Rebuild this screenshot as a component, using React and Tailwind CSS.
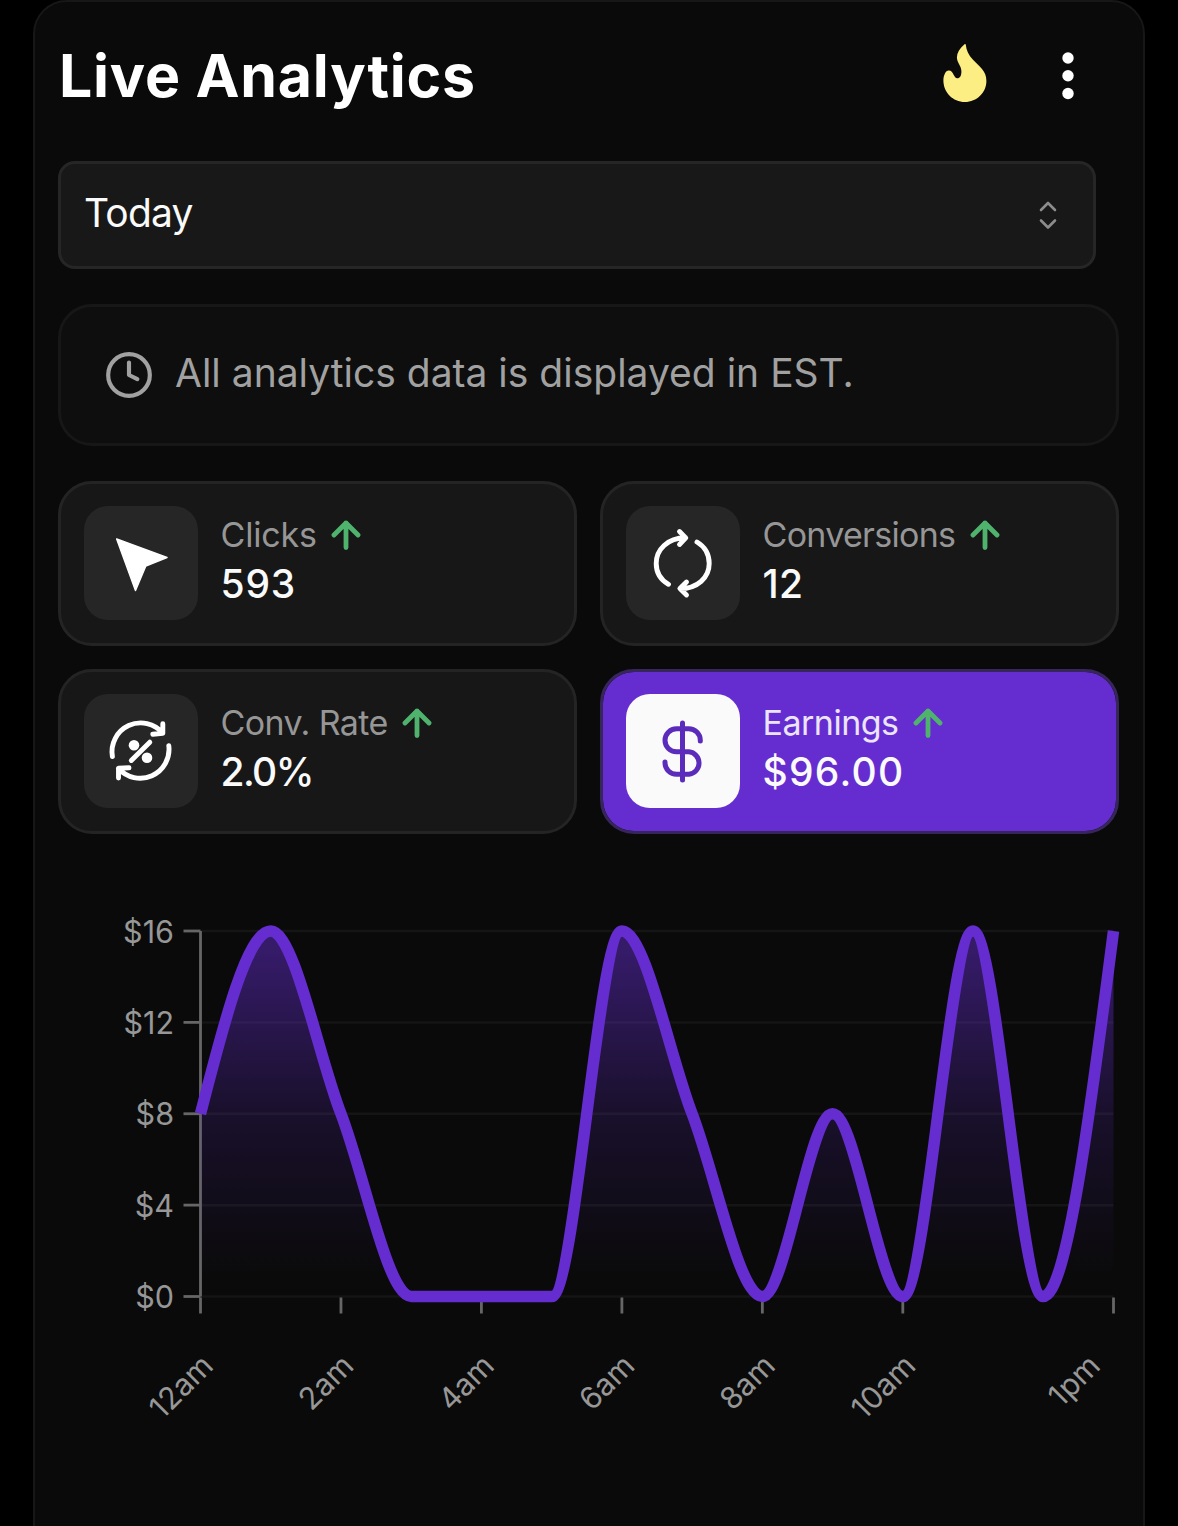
import React from "react";
import { Clock } from "lucide-react";

const earnings = [8, 16, 8, 0, 0, 0, 16, 8, 0, 8, 0, 16, 0, 16];

const xTicks = [
  { index: 0, label: "12am" },
  { index: 2, label: "2am" },
  { index: 4, label: "4am" },
  { index: 6, label: "6am" },
  { index: 8, label: "8am" },
  { index: 10, label: "10am" },
  { index: 13, label: "1pm", shift: -26 },
];

const yTicks = [16, 12, 8, 4, 0];

// Chart area, in px inside the svg
const LEFT = 142.5;
const RIGHT = 1055.5;
const TOP = 51;
const BOTTOM = 416.5;

const getX = (i) => LEFT + ((RIGHT - LEFT) * i) / (earnings.length - 1);
const getY = (v) => BOTTOM - ((BOTTOM - TOP) * v) / 16;

// Monotone cubic curve through the points
const buildLine = (values) => {
  const pts = values.map((v, i) => [getX(i), getY(v)]);
  const last = pts.length - 1;
  const slope = (i) =>
    (pts[i + 1][1] - pts[i][1]) / (pts[i + 1][0] - pts[i][0]);

  const tangents = pts.map((_, i) => {
    if (i === 0 || i === last) return 0;
    const a = slope(i - 1);
    const b = slope(i);
    const s = Math.sign(a) + Math.sign(b);
    return s * Math.min(Math.abs(a), Math.abs(b), 0.25 * Math.abs(a + b)) || 0;
  });
  tangents[0] = (3 * slope(0) - tangents[1]) / 2;
  tangents[last] = (3 * slope(last - 1) - tangents[last - 1]) / 2;

  let d = `M${pts[0][0]},${pts[0][1]}`;
  for (let i = 0; i < last; i++) {
    const [x0, y0] = pts[i];
    const [x1, y1] = pts[i + 1];
    const dx = (x1 - x0) / 3;
    d += `C${x0 + dx},${y0 + dx * tangents[i]} ${x1 - dx},${
      y1 - dx * tangents[i + 1]
    } ${x1},${y1}`;
  }
  return d;
};

const FlameIcon = () => (
  <svg width="44" height="58" viewBox="0 0 44 58" fill="#fdee84" className="-mt-[5px]">
    <path d="M21.500 0.300C16 5 13.500 9.500 14 14.500C14.500 19 18.400 22 18.400 27.500C18.400 31.500 17 34.300 14.300 34.300C10.500 34.300 10.800 26.500 5.800 26.500C2.500 26.500 0.400 31.500 0.400 36.500C0.400 48.500 10 58 21.900 58C33.800 58 43.400 48.500 43.400 37C43.400 32 42 28.500 39 25C36 21.500 33 19 30 15.800C25.500 11 23.300 6.500 22.800 0.800Q22.500 -0.500 21.500 0.300Z" />
  </svg>
);

const DotsIcon = () => (
  <svg width="24" height="58" viewBox="0 0 24 58" fill="white">
    <circle cx="12" cy="11" r="5.7" />
    <circle cx="12" cy="28.7" r="5.7" />
    <circle cx="12" cy="46.5" r="5.7" />
  </svg>
);

const SelectIcon = () => (
  <svg
    width="20"
    height="30"
    viewBox="0 0 20 30"
    fill="none"
    stroke="#8c8c8c"
    strokeWidth="2.600"
    strokeLinecap="round"
    strokeLinejoin="round"
  >
    <path d="M3 10L10 3L17 10M3 20.500L10 27.500L17 20.500" />
  </svg>
);

const ArrowUp = () => (
  <svg
    width="30"
    height="32"
    viewBox="0 0 30 32"
    fill="none"
    stroke="#4fb36d"
    strokeWidth="4.800"
    strokeLinecap="round"
    strokeLinejoin="round"
  >
    <path d="M15 28.500V4M3 16L15 4L27 16" />
  </svg>
);

const CursorIcon = () => (
  <svg width="114" height="114" viewBox="0.5 0 114 114" fill="white">
    <path
      d="M33.200 33L83.500 51.500L62.300 60L52 84.500Z"
      stroke="white"
      strokeWidth="1.500"
      strokeLinejoin="round"
    />
  </svg>
);

const CycleIcon = () => (
  <svg
    width="114"
    height="114"
    viewBox="0.5 0 114 114"
    fill="none"
    stroke="white"
    strokeWidth="4.900"
    strokeLinecap="round"
    strokeLinejoin="round"
  >
    <path d="M43 78.300C35.500 74 30.700 66.500 30.700 57.500C30.700 43.500 42 32 60 31.800M54 25.500L60.300 31.900L54 38.500" />
    <path d="M71.500 36C79 40.500 83.700 48.500 83.700 57.500C83.700 71.500 72 82.600 54.500 82.600M61 76L54.400 82.600L61 89" />
  </svg>
);

const RateIcon = () => (
  <svg
    width="114"
    height="114"
    viewBox="0.5 -0.5 114 114"
    fill="none"
    stroke="white"
    strokeWidth="4.900"
    strokeLinecap="round"
    strokeLinejoin="round"
  >
    <path d="M28.900 62A28.800 28.800 0 0 1 79.300 38.600M79.300 29.300L79.300 38.800L69.300 39.700" />
    <path d="M85.300 51.300A28.800 28.800 0 0 1 35 73.800M35 83.500L35 73.800L45.500 73.300" />
    <path d="M66.300 47.700L47.800 66" />
    <circle cx="50.500" cy="50.700" r="5.300" fill="white" stroke="none" />
    <circle cx="63.500" cy="63.300" r="5.300" fill="white" stroke="none" />
  </svg>
);

const DollarIcon = () => (
  <svg
    width="114"
    height="114"
    viewBox="0.5 -0.5 114 114"
    fill="none"
    stroke="#5b2cbb"
    strokeWidth="5"
    strokeLinecap="round"
  >
    <path d="M57 28.500V85.500" />
    <path d="M74.800 46.500V45.500A11.500 11.500 0 0 0 63.300 34.300H51A11.500 11.500 0 0 0 51 57.300H63.300A11.300 11.300 0 0 1 63.300 79.800H51A11.500 11.500 0 0 1 39.500 68.500V67.500" />
  </svg>
);

const stats = [
  {
    label: "Clicks",
    value: "593",
    icon: <CursorIcon />,
    labelClass: "tracking-[-0.2px]",
    valueClass: "tracking-[0.8px]",
  },
  {
    label: "Conversions",
    value: "12",
    icon: <CycleIcon />,
    labelClass: "tracking-[-0.7px]",
    valueClass: "tracking-[0.3px]",
  },
  {
    label: "Conv. Rate",
    value: "2.0%",
    icon: <RateIcon />,
    labelClass: "tracking-[-0.6px]",
    valueClass: "tracking-[-1.6px]",
  },
  {
    label: "Earnings",
    value: "$96.00",
    icon: <DollarIcon />,
    labelClass: "tracking-[-0.5px]",
    valueClass: "tracking-[1.3px]",
    active: true,
  },
];

const StatCard = ({ label, value, icon, active, labelClass, valueClass }) => (
  <div
    className={`flex h-[165px] items-start rounded-[34px] border-[3px] pt-[22px] pl-[22.500px] ${
      active
        ? "border-[#36265c] bg-[#652dd0] bg-clip-padding"
        : "border-[#242424] bg-[#171717]"
    }`}
  >
    <div
      className={`h-[114px] w-[114px] shrink-0 rounded-[24px] ${
        active ? "bg-[#fafafa]" : "bg-[#262626]"
      }`}
    >
      {icon}
    </div>
    <div className="ml-[23px] flex flex-col pt-1">
      <div className="flex h-[49px] items-center gap-[14.500px]">
        <span
          className={`text-[34px] leading-[49px] ${labelClass} ${
            active ? "text-[#ece4fb]" : "text-[#969696]"
          }`}
        >
          {label}
        </span>
        <ArrowUp />
      </div>
      <span
        className={`h-[49px] text-[39px] leading-[49px] font-medium text-[#fafafa] ${valueClass}`}
      >
        {value}
      </span>
    </div>
  </div>
);

const EarningsChart = () => {
  const line = buildLine(earnings);

  return (
    <svg width="1070" height="560" viewBox="0 0 1070 560" className="block">
      <defs>
        <linearGradient id="fill" x1="0" y1="0" x2="0" y2="1">
          <stop offset="5%" stopColor="#652dd0" stopOpacity="0.48" />
          <stop offset="50%" stopColor="#652dd0" stopOpacity="0.17" />
          <stop offset="95%" stopColor="#652dd0" stopOpacity="0" />
        </linearGradient>
      </defs>

      {/* Grid */}
      {yTicks.map((v) => (
        <line
          key={v}
          x1={LEFT}
          x2={RIGHT}
          y1={getY(v)}
          y2={getY(v)}
          stroke="#151515"
          strokeWidth="2.500"
        />
      ))}

      {/* Axes */}
      <g stroke="#666666" strokeWidth="2.800">
        <line x1={LEFT} x2={LEFT} y1={TOP} y2={BOTTOM} />
        {yTicks.map((v) => (
          <line key={v} x1={LEFT - 17} x2={LEFT} y1={getY(v)} y2={getY(v)} />
        ))}
        {xTicks.map((t) => (
          <line
            key={t.label}
            x1={getX(t.index)}
            x2={getX(t.index)}
            y1={BOTTOM + 1}
            y2={BOTTOM + 17}
          />
        ))}
      </g>

      <path
        d={`${line}L${RIGHT},${BOTTOM}L${LEFT},${BOTTOM}Z`}
        fill="url(#fill)"
      />
      <path d={line} fill="none" stroke="#652dd0" strokeWidth="11.500" />

      {/* Labels */}
      <g fill="#979797" fontSize="30.500" textAnchor="end">
        {yTicks.map((v) => (
          <text key={v} x={LEFT - 26.5} y={getY(v) + 11.5}>
            ${v}
          </text>
        ))}
        {xTicks.map((t) => {
          const x = getX(t.index) + 14.5 + (t.shift || 0);
          return (
            <text
              key={t.label}
              x={x}
              y="487.5"
              transform={`rotate(-45 ${x} 487.5)`}
            >
              {t.label}
            </text>
          );
        })}
      </g>
    </svg>
  );
};

const App = () => {
  return (
    <div className="h-[1526px] overflow-hidden bg-black pl-[33px] font-['Inter',sans-serif]">
      <div className="h-[1600px] w-[1112px] rounded-[34px] border-2 border-[#171717] bg-[#0a0a0a] pr-6 pl-[23px]">
        {/* Header */}
        <div className="flex h-[147px] items-center justify-between pr-[39px]">
          <h1 className="mt-[2px] ml-px text-[59px] font-bold tracking-[0.75px] whitespace-nowrap text-white">
            Live Analytics
          </h1>
          <div className="flex items-center gap-[69px]">
            <FlameIcon />
            <DotsIcon />
          </div>
        </div>

        {/* Date range */}
        <button className="mt-3 flex h-[108px] w-[1038px] items-center justify-between rounded-[17px] border-[3px] border-[#262626] bg-[#181818] pr-[35px] pl-[23px]">
          <span className="-mt-1 text-[39px] tracking-[-0.8px] text-[#fafafa]">
            Today
          </span>
          <SelectIcon />
        </button>

        {/* Timezone notice */}
        <div className="mt-[35px] flex h-[142px] items-center rounded-[34px] border-[3px] border-[#171717] bg-[#0e0e0e] pl-[43px] text-[#a1a1a1]">
          <Clock size={50} strokeWidth={2} className="-mt-px" />
          <span className="-mt-1 ml-[21px] text-[39px] whitespace-nowrap">
            All analytics data is displayed in EST.
          </span>
        </div>

        {/* Stats */}
        <div className="mt-[35px] grid grid-cols-2 gap-x-[23px] gap-y-[23px]">
          {stats.map((stat) => (
            <StatCard key={stat.label} {...stat} />
          ))}
        </div>

        <div className="mt-[46px]">
          <EarningsChart />
        </div>
      </div>
    </div>
  );
};

export default App;
